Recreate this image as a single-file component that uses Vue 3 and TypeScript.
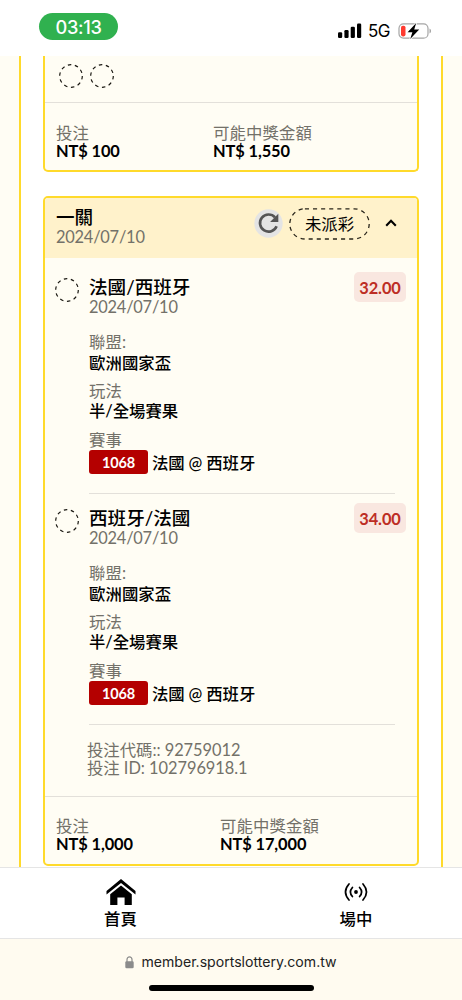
<script setup lang="ts">
interface Leg {
  pick: string
  date: string
  odds: string
  league: string
  play: string
  code: string
  match: string
}

const legs: Leg[] = [
  { pick: '法國/西班牙', date: '2024/07/10', odds: '32.00', league: '歐洲國家盃', play: '半/全場賽果', code: '1068', match: '法國 @ 西班牙' },
  { pick: '西班牙/法國', date: '2024/07/10', odds: '34.00', league: '歐洲國家盃', play: '半/全場賽果', code: '1068', match: '法國 @ 西班牙' },
]
</script>

<template>
  <div class="phone">
    <header class="status">
      <span class="time">03:13</span>
      <div class="indicators">
        <svg class="signal" width="24" height="16" viewBox="0 0 24 16">
          <rect x="0" y="9.3" width="4.2" height="5.7" rx="1.2" />
          <rect x="6.4" y="7" width="4.2" height="8" rx="1.2" />
          <rect x="12.7" y="3.8" width="4.2" height="11.2" rx="1.2" />
          <rect x="19" y="0.5" width="4.2" height="14.5" rx="1.2" />
        </svg>
        <span class="network">5G</span>
        <svg class="battery" width="34" height="18" viewBox="0 0 34 18">
          <rect x="1" y="1.8" width="29" height="14.4" rx="4.5" fill="none" stroke="#a5a5a5" stroke-width="1.2" />
          <path d="M31.5 6.5v5q1.6-.7 1.6-2.5t-1.6-2.5z" fill="#a5a5a5" />
          <rect x="3" y="3.8" width="4.5" height="10.6" rx="1.8" fill="#ff3b30" />
          <path d="M18.2 1L9.6 10.3h4.8L12.2 17l9-9.5h-5z" fill="#000" stroke="#fff" stroke-width="1.6" paint-order="stroke" />
        </svg>
      </div>
    </header>

    <main class="viewport">
      <div class="panel">
        <section class="card previous">
          <div class="rings">
            <svg v-for="n in 2" :key="n" class="ring" width="24" height="24" viewBox="0 0 24 24"><circle cx="12" cy="12" r="11.3" /></svg>
          </div>
          <div class="totals">
            <div class="stake"><div class="label">投注</div><div class="amount">NT$ 100</div></div>
            <div class="payout"><div class="label">可能中獎金額</div><div class="amount">NT$ 1,550</div></div>
          </div>
        </section>

        <section class="card current">
          <div class="head">
            <div class="head-text">
              <div class="title">一關</div>
              <div class="date">2024/07/10</div>
            </div>
            <svg class="refresh" width="29" height="29" viewBox="0 0 29 29">
              <circle cx="14.5" cy="14.5" r="14.2" fill="#e4e4e4" />
              <path d="M21 8.3A8.6 8.6 0 1 0 22.6 17.2" fill="none" stroke="#555" stroke-width="2.6" />
              <path d="M24.3 4.8V13h-8.2z" fill="#555" />
            </svg>
            <div class="pill">
              <svg class="outline" width="81" height="32" viewBox="0 0 81 32"><rect x=".8" y=".8" width="79.4" height="30.2" rx="15.1" /></svg>
              <span>未派彩</span>
            </div>
            <svg class="chevron" width="12" height="8" viewBox="0 0 12 8"><path d="M1.2 6.8L6 1.8l4.8 5" /></svg>
          </div>

          <article v-for="leg in legs" :key="leg.pick" class="leg">
            <svg class="ring" width="24" height="24" viewBox="0 0 24 24"><circle cx="12" cy="12" r="11.3" /></svg>
            <div class="details">
              <div class="top">
                <div>
                  <div class="title">{{ leg.pick }}</div>
                  <div class="date">{{ leg.date }}</div>
                </div>
                <div class="odds">{{ leg.odds }}</div>
              </div>
              <div class="field"><div class="label">聯盟:</div><div class="value">{{ leg.league }}</div></div>
              <div class="field"><div class="label">玩法</div><div class="value play">{{ leg.play }}</div></div>
              <div class="label">賽事</div>
              <div class="match"><span class="code">{{ leg.code }}</span><span>{{ leg.match }}</span></div>
            </div>
          </article>

          <div class="ids">
            <div>投注代碼:: 92759012</div>
            <div>投注 ID: 102796918.1</div>
          </div>
          <div class="totals">
            <div class="stake"><div class="label">投注</div><div class="amount">NT$ 1,000</div></div>
            <div class="payout"><div class="label">可能中獎金額</div><div class="amount">NT$ 17,000</div></div>
          </div>
        </section>
      </div>
    </main>

    <nav class="tabs">
      <div class="tab home">
        <svg width="30" height="27" viewBox="0 0 30 27">
          <path d="M15 0L.5 12v3.6L15 4l14.5 11.6V12z" />
          <path d="M15 6.6L4.2 15.2V26h7.2v-7.5h7.2V26h7.2V15.2z" />
        </svg>
        <span>首頁</span>
      </div>
      <div class="tab live">
        <svg width="24" height="20" viewBox="0 0 24 20">
          <circle cx="12" cy="10" r="1.9" />
          <g fill="none" stroke="#000" stroke-width="1.7" stroke-linecap="round">
            <path d="M8.4 5.5q-4 4.5 0 9M15.6 5.5q4 4.5 0 9M5 2q-7 8 0 16M19 2q7 8 0 16" />
          </g>
        </svg>
        <span>場中</span>
      </div>
    </nav>

    <footer class="browser">
      <div class="address">
        <svg width="9" height="13" viewBox="0 0 9 13">
          <rect x=".3" y="5.3" width="8.4" height="7" rx="1.3" fill="#8b8b8b" />
          <path d="M2 6V3.6a2.5 2.7 0 0 1 5 0V6" fill="none" stroke="#8b8b8b" stroke-width="1.2" />
        </svg>
        <span>member.sportslottery.com.tw</span>
      </div>
      <div class="handle"></div>
    </footer>
  </div>
</template>

<style>
body { margin: 0; background: #fff; }
</style>

<style scoped>
* { box-sizing: border-box; }
.phone { width: 462px; height: 1000px; overflow: hidden; display: flex; flex-direction: column; background: #fff; color: #000; font-family: Lato, "Noto Sans CJK TC", sans-serif; }
svg { display: block; flex: none; }
.status { height: 56px; flex: none; display: flex; justify-content: space-between; align-items: flex-start; padding: 13px 30px 0 39px; }
.time { width: 79px; height: 27px; border-radius: 14px; background: #30b14f; color: #fff; font: 500 18.2px/28px Inter, sans-serif; letter-spacing: -.3px; text-align: center; }
.indicators { display: flex; align-items: center; padding-top: 9px; }
.network { width: 22px; margin: 0 8px 0 6px; font: 400 17px/18px Inter, sans-serif; letter-spacing: -.5px; white-space: nowrap; }
.viewport { height: 811px; flex: none; overflow: hidden; padding: 0 19px; background: #fffdf4; }
.panel { height: 811px; border: solid #ffda2b; border-width: 0 2px; background: #fff; padding: 0 22px; }
.card { border: 2px solid #ffda2b; background: #fffdf4; width: 376px; }
.previous { height: 116px; border-top: 0; border-radius: 0 0 5px 5px; }
.rings { height: 47px; display: flex; gap: 7px; padding: 8px 0 0 14px; border-bottom: 1px solid #e3e0da; }
.ring circle { fill: none; stroke: #17150f; stroke-width: 1.2; stroke-dasharray: 3.5 3.6; }
.totals { display: flex; padding: 21px 0 0 11px; }
.stake { width: 157px; }
.current .stake { width: 164px; }
.current .totals { padding-top: 20px; }
.label { font-size: 16.4px; line-height: 20px; height: 20px; color: #737169; letter-spacing: .1px; }
.totals .label, .totals .amount { height: 18px; line-height: 18px; }
.amount { font-size: 16.4px; font-weight: 700; letter-spacing: -.1px; }
.current { height: 670px; margin-top: 24px; border-radius: 5px; overflow: hidden; }
.head { height: 60px; display: flex; background: #fff2cb; padding-left: 11px; }
.head-text { width: 198px; padding-top: 9px; }
.title { font-size: 18.6px; line-height: 20px; height: 20px; font-weight: 500; }
.date { font-size: 16.4px; line-height: 20px; height: 20px; color: #737169; letter-spacing: -.22px; }
.refresh { margin: 11px 0 0; }
.pill { position: relative; width: 81px; height: 32px; margin: 10px 0 0 6px; text-align: center; font-size: 16.4px; line-height: 32px; }
.outline { position: absolute; inset: 0; }
.outline rect { fill: none; stroke: #28241a; stroke-width: 1.3; stroke-dasharray: 4.1 4; }
.chevron { margin: 21px 0 0 15px; }
.chevron path { fill: none; stroke: #000; stroke-width: 2.1; }
.leg { display: flex; padding: 19px 22px 0 10px; }
.leg + .leg { padding-top: 14px; }
.leg .ring { margin-top: 1px; }
.details { width: 306px; height: 217px; margin-left: 10px; border-bottom: 1px solid #e3e0da; }
.top { display: flex; justify-content: space-between; height: 55px; }
.odds { width: 52px; height: 30px; margin: -5px -11px 0 0; border-radius: 5px; background: #f9e7e0; color: #bd2d24; text-align: center; font-size: 16.4px; line-height: 31px; font-weight: 700; letter-spacing: -.1px; }
.field { height: 49px; }
.value { font-size: 16.4px; line-height: 21px; font-weight: 500; letter-spacing: .05px; }
.play { line-height: 20px; letter-spacing: -.05px; }
.match { display: flex; gap: 4px; height: 24px; font-size: 16.4px; line-height: 25px; font-weight: 500; letter-spacing: -.1px; }
.code { width: 59px; border-radius: 3px; background: #b40000; color: #fff; text-align: center; font-size: 14.5px; font-weight: 700; letter-spacing: -.2px; }
.ids { height: 72px; padding: 16px 0 0 42px; border-bottom: 1px solid #e3e0da; font-size: 16.4px; line-height: 18px; color: #737169; letter-spacing: -.04px; }
.tabs { height: 72px; flex: none; display: flex; border: solid #e5e5e5; border-width: 1px 0; background: #fff; font-size: 16.4px; font-weight: 500; }
.tab { display: flex; flex-direction: column; align-items: center; }
.tab span { line-height: 20px; }
.home { width: 241px; flex: none; padding-top: 11px; gap: 3px; }
.live { width: 230px; flex: none; padding-top: 14px; gap: 7px; }
.browser { flex: 1; background: #fffbf0; display: flex; flex-direction: column; align-items: center; }
.address { height: 46px; display: flex; align-items: center; gap: 7px; font: 400 14.1px/20px Inter, sans-serif; color: #222; }
.handle { width: 165px; height: 6px; border-radius: 3px; background: #000; }
</style>
